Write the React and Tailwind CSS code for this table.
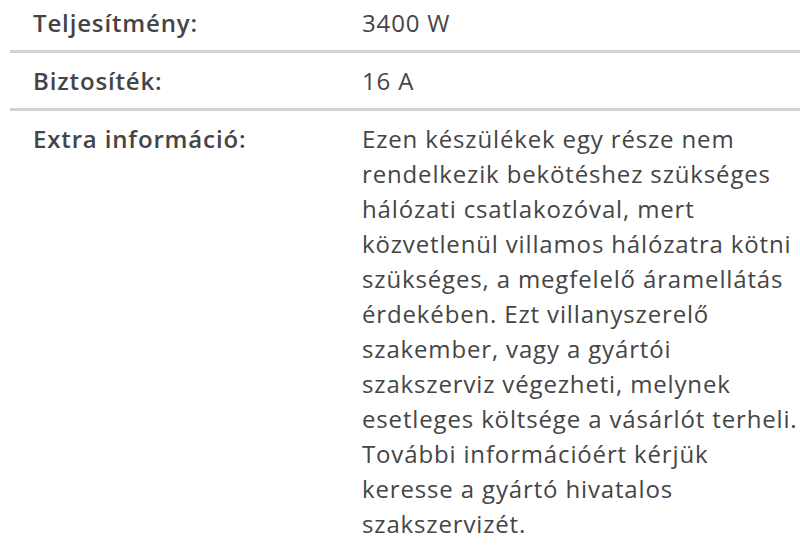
const lines = [
  "Ezen készülékek egy része nem",
  "rendelkezik bekötéshez szükséges",
  "hálózati csatlakozóval, mert",
  "közvetlenül villamos hálózatra kötni",
  "szükséges, a megfelelő áramellátás",
  "érdekében. Ezt villanyszerelő",
  "szakember, vagy a gyártói",
  "szakszerviz végezheti, melynek",
  "esetleges költsége a vásárlót terheli.",
  "További információért kérjük",
  "keresse a gyártó hivatalos",
  "szakszervizét.",
];

export default function App() {
  const rows = [
    { label: "Teljesítmény:", value: "3400 W" },
    { label: "Biztosíték:", value: "16 A" },
  ];
  return (
    <div className="w-[800px] h-[545px] overflow-hidden bg-white text-[#454545]" style={{ fontFamily: '"Open Sans", "Noto Sans", sans-serif' }}>
      <div className="ml-[10px] -mt-[5px]">
        {rows.map((r) => (
          <div key={r.label} className="flex border-b-[3px] border-[#d2d2d2] py-[10px] text-[24px] leading-[35px] tracking-[0.85px]">
            <div className="w-[352px] shrink-0 pl-[23px] font-semibold">{r.label}</div>
            <div>{r.value}</div>
          </div>
        ))}
        <div className="flex py-[10px] text-[24px] leading-[35px] tracking-[0.85px]">
          <div className="w-[352px] shrink-0 pl-[23px] font-semibold">Extra információ:</div>
          <div className="w-[438px]">
            {lines.map((l) => (
              <div key={l} className="whitespace-nowrap">{l}</div>
            ))}
          </div>
        </div>
      </div>
    </div>
  );
}
